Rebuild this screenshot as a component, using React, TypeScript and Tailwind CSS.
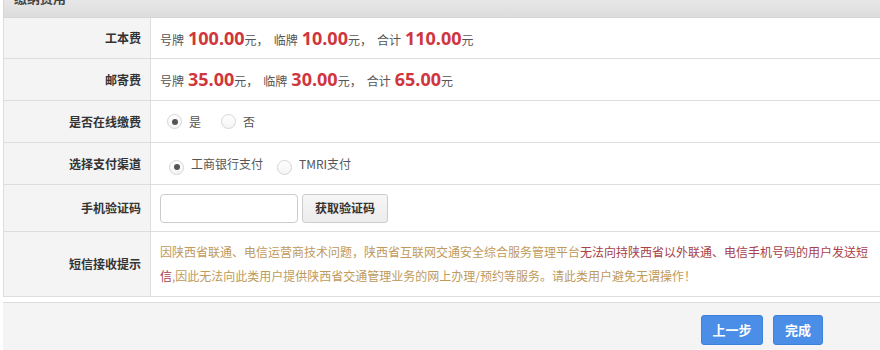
import React, { useState } from "react";

const FONT = { fontFamily: '"Noto Sans CJK SC", "Liberation Sans", sans-serif' };
const NUM = { fontFamily: '"Open Sans", "Liberation Sans", sans-serif' };

function Radio({ checked, onClick }: { checked: boolean; onClick: () => void }) {
  return (
    <span
      onClick={onClick}
      className="flex h-[15px] w-[15px] cursor-pointer items-center justify-center rounded-full border border-[#d6d6d6] bg-gradient-to-b from-white to-[#f4f4f4]"
    >
      {checked && <span className="h-[6px] w-[6px] rounded-full bg-[#555]" />}
    </span>
  );
}

function Row({
  label,
  h,
  children,
}: {
  label: string;
  h: string;
  children: React.ReactNode;
}) {
  return (
    <div className={`flex border-b border-[#dddddd] ${h}`}>
      <div className="flex w-[147px] shrink-0 items-center justify-end border-r border-[#dddddd] bg-[#f4f4f4] pr-[9px] text-[12px] font-bold text-[#333]">
        {label}
      </div>
      <div className="flex flex-1 items-center bg-white pl-[9px]">{children}</div>
    </div>
  );
}

function Price({ v }: { v: string }) {
  return (
    <span style={NUM} className="ml-[4px] text-[18px] font-bold text-[#d0363d]">
      {v}
    </span>
  );
}

function Fees({ a, b, total }: { a: string; b: string; total: string }) {
  return (
    <span className="text-[12px] text-[#555]">
      号牌<Price v={a} />元，<span className="ml-[5px]">临牌</span>
      <Price v={b} />元，<span className="ml-[5px]">合计</span>
      <Price v={total} />元
    </span>
  );
}

export default function App() {
  const [online, setOnline] = useState(true);
  const [channel, setChannel] = useState("icbc");

  return (
    <div style={FONT} className="h-[350px] w-[880px] overflow-hidden bg-white">
      <div className="ml-[3px] w-[900px]">
        <div className="mt-[-22px] flex h-[40px] items-center border-b border-l border-[#d6d6d6] bg-gradient-to-b from-[#f6f6f6] to-[#dcdcdc] pl-[10px] text-[13px] font-bold text-[#444]">
          缴纳费用
        </div>

        <div className="border-l border-[#dddddd]">
          <Row label="工本费" h="h-[41px]">
            <Fees a="100.00" b="10.00" total="110.00" />
          </Row>
          <Row label="邮寄费" h="h-[42px]">
            <Fees a="35.00" b="30.00" total="65.00" />
          </Row>
          <Row label="是否在线缴费" h="h-[42px]">
            <div className="flex items-center text-[12px] text-[#555]">
              <span className="ml-[7px]">
                <Radio checked={online} onClick={() => setOnline(true)} />
              </span>
              <span className="ml-[7px]">是</span>
              <span className="ml-[20px]">
                <Radio checked={!online} onClick={() => setOnline(false)} />
              </span>
              <span className="ml-[7px]">否</span>
            </div>
          </Row>
          <Row label="选择支付渠道" h="h-[42px]">
            <div className="flex items-center text-[12px] text-[#555]">
              <span className="ml-[9px] mt-[7px]">
                <Radio checked={channel === "icbc"} onClick={() => setChannel("icbc")} />
              </span>
              <span className="ml-[7px]">工商银行支付</span>
              <span className="ml-[14px] mt-[7px]">
                <Radio checked={channel === "tmri"} onClick={() => setChannel("tmri")} />
              </span>
              <span className="ml-[7px]">TMRI支付</span>
            </div>
          </Row>
          <Row label="手机验证码" h="h-[47px]">
            <div className="flex items-center">
              <input className="h-[29px] w-[138px] rounded-[4px] border border-[#cccccc] bg-white px-2 text-[12px] outline-none" />
              <button className="ml-[4px] h-[29px] w-[86px] rounded-[3px] border border-[#cccccc] bg-gradient-to-b from-[#f6f6f6] to-[#ececec] text-[12px] font-bold text-[#333]">
                获取验证码
              </button>
            </div>
          </Row>
          <Row label="短信接收提示" h="h-[65px]">
            <p className="w-[730px] text-[12px] leading-[24px] text-[#c09a5b]">
              因陕西省联通、电信运营商技术问题，陕西省互联网交通安全综合服务管理平台
              <span className="text-[#a8414a]">
                无法向持陕西省以外联通、电信手机号码的用户发送短
                <br />信
              </span>
              ,因此无法向此类用户提供陕西省交通管理业务的网上办理/预约等服务。请此类用户避免无谓操作！
            </p>
          </Row>
        </div>

        <div className="mt-[5px] flex h-[60px] items-start justify-end border-t border-[#dddddd] bg-[#f4f4f4] pr-[80px] pt-[12px]">
          <button className="h-[30px] w-[62px] rounded-[3px] border border-[#3f82dc] bg-[#4a8ee8] text-[13px] font-bold text-white">
            上一步
          </button>
          <button className="ml-[10px] h-[30px] w-[50px] rounded-[3px] border border-[#3f82dc] bg-[#4a8ee8] text-[13px] font-bold text-white">
            完成
          </button>
        </div>
      </div>
    </div>
  );
}
